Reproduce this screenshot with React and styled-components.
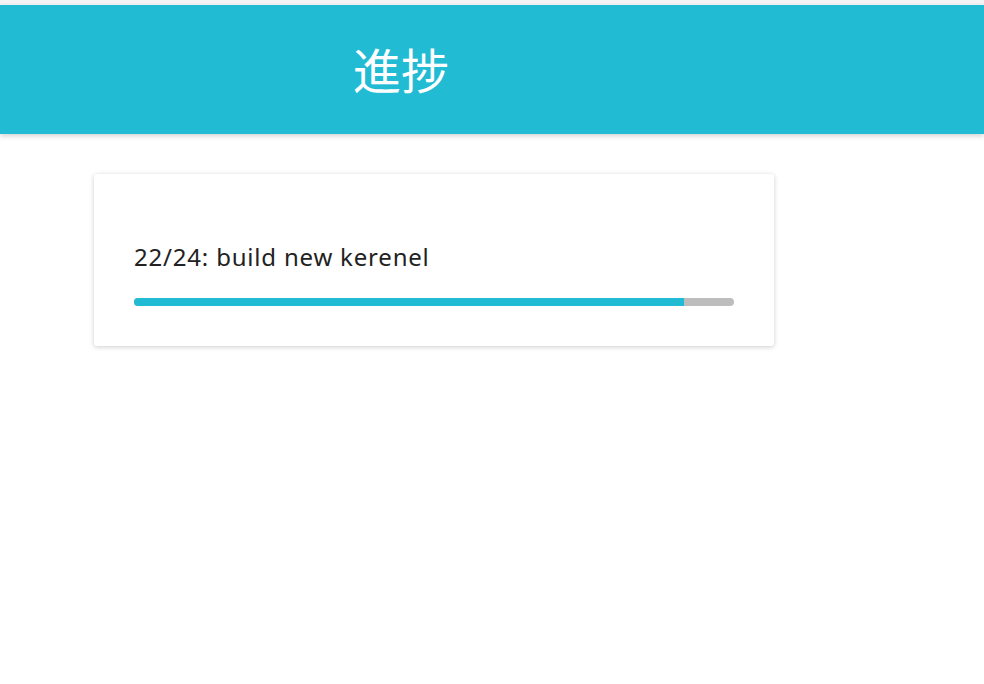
import React from 'react';
import { styled, createGlobalStyle } from 'styled-components';

const GlobalStyle = createGlobalStyle`
  html, body {
    margin: 0;
    padding: 0;
    background: #ffffff;
    font-family: "Noto Sans", "Noto Sans CJK JP", sans-serif;
  }
`;

const Page = styled.div`
  min-height: 684px;
  border-top: 5px solid #f4f4f4;
`;

const Head = styled.header`
  height: 129px;
  background-color: #21bbd4;
  box-shadow: 0px 2px 5px rgba(0, 0, 0, 0.18);
  display: flex;
  align-items: center;
  padding-left: 353px;
`;

const Title = styled.h1`
  margin: 0 0 4px;
  color: #ffffff;
  font-family: "Noto Sans CJK JP", sans-serif;
  font-weight: 400;
  font-size: 48px;
  line-height: 1;
`;

const Main = styled.main`
  padding: 40px 0 0 94px;
`;

const Card = styled.div`
  width: 680px;
  box-sizing: border-box;
  padding: 69px 40px 40px;
  background: #ffffff;
  border-radius: 3px;
  box-shadow: 0px 1px 5px rgba(0, 0, 0, 0.2);
`;

const Label = styled.div`
  color: #222222;
  font-size: 24px;
  letter-spacing: 0.8px;
  line-height: 28px;
`;

const Track = styled.div`
  margin-top: 27px;
  height: 8px;
  border-radius: 4px;
  background-color: #bdbdbd;
  overflow: hidden;
`;

const Fill = styled.div`
  height: 100%;
  background-color: #21bbd4;
`;

const task = { done: 22, total: 24, name: 'build new kerenel' };

export default function App () {
  const percent = (task.done / task.total) * 100;

  return (
    <Page>
      <GlobalStyle />
      <Head>
        <Title>進捗</Title>
      </Head>
      <Main>
        <Card>
          <Label>{task.done}/{task.total}: {task.name}</Label>
          <Track>
            <Fill style={{ width: `${percent}%` }} />
          </Track>
        </Card>
      </Main>
    </Page>
  );
}
